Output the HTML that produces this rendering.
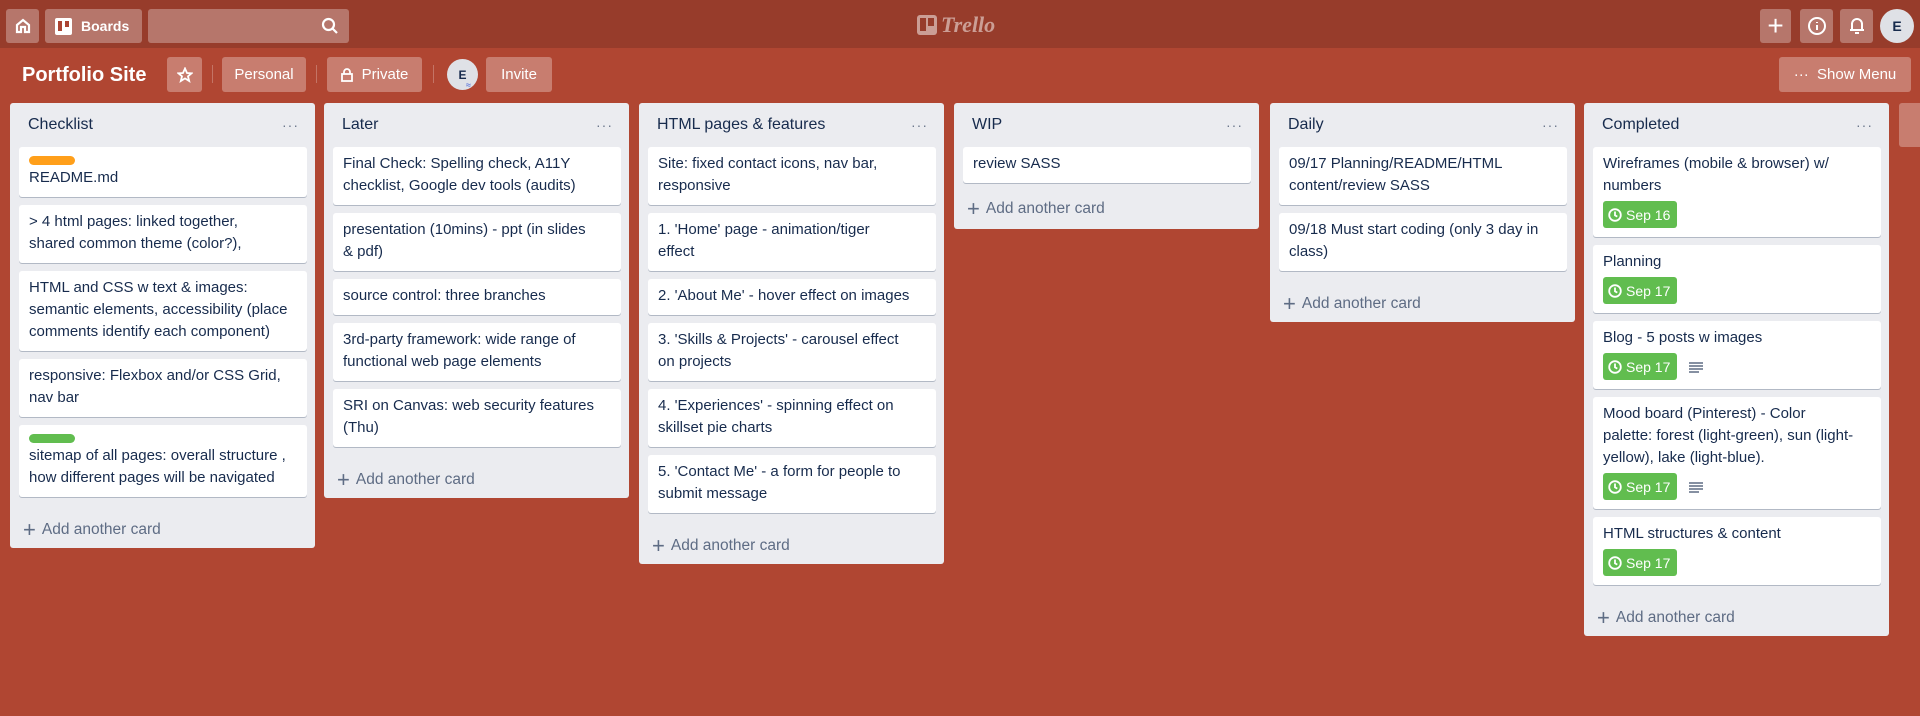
<!DOCTYPE html>
<html><head><meta charset="utf-8"><style>
*{box-sizing:border-box;margin:0;padding:0}
body{width:1920px;height:716px;overflow:hidden;background:#b04632;font-family:"Liberation Sans",sans-serif;color:#172b4d;position:relative}
.top{position:absolute;left:0;top:0;width:1920px;height:48px;background:#973c2b}
.btn{position:absolute;background:rgba(255,255,255,.3);border-radius:3px;color:#fff;display:flex;align-items:center;justify-content:center;font-size:15px}
.list{position:absolute;top:103px;width:305px;background:#ebecf0;border-radius:3px;padding:0 8px 0 9px}
.lh{height:44px;display:flex;align-items:center;justify-content:space-between;padding:0 8px 0 9px;font-size:16px}
.lh span.d{color:#6b778c;font-size:14px;letter-spacing:1px}
.card{background:#fff;border-radius:3px;box-shadow:0 1px 0 rgba(9,30,66,.25);margin-bottom:8.5px;padding:6px 10px 7.5px;font-size:15px;line-height:22px;white-space:nowrap;color:#172b4d}
.card.b{padding-bottom:8.5px}
.lab{width:46px;height:9px;border-radius:5px;margin:3px 0 2px}
.add{height:43px;display:flex;align-items:center;color:#5e6c84;font-size:15.5px;padding-left:4px;padding-top:7px}
.add b{font-weight:normal;font-size:22px;margin-right:6px;line-height:1}
.badge{display:inline-flex;align-items:center;background:#61bd4f;color:#fff;border-radius:3px;height:27px;padding:0 7px 0 5px;font-size:14px;margin-top:4px;vertical-align:middle}
.badge svg{margin-right:4px}
.desc{display:inline-block;vertical-align:middle;margin-left:12px;margin-top:4px}
</style></head><body>
<div class="top"></div>
<div class="btn" style="left:6px;top:9px;width:33px;height:34px"><svg width="18" height="18" viewBox="0 0 18 18" fill="none" stroke="#fff" stroke-width="2.2"><path d="M3 8L9 3L15 8V15H11V10H7V15H3Z"/></svg></div>
<div class="btn" style="left:45px;top:9px;width:97px;height:34px;font-weight:bold;font-size:14px;justify-content:flex-start;padding-left:10px"><svg width="17" height="17" viewBox="0 0 17 17" style="margin-right:9px"><rect x="0" y="0" width="17" height="17" rx="2" fill="#fff"/><rect x="3" y="3" width="4" height="10" fill="#ab4433"/><rect x="10" y="3" width="4" height="6" fill="#ab4433"/></svg>Boards</div>
<div class="btn" style="left:148px;top:9px;width:201px;height:34px;justify-content:flex-end;padding-right:10px"><svg width="18" height="18" viewBox="0 0 18 18" fill="none" stroke="#fff" stroke-width="2.2"><circle cx="7.5" cy="7.5" r="5.5"/><path d="M11.5 11.5L16 16"/></svg></div>
<div style="position:absolute;left:917px;top:12px;display:flex;align-items:center;color:rgba(255,255,255,.5);font-style:italic;font-weight:bold;font-size:22px;font-family:'Liberation Serif',serif"><svg width="20" height="20" viewBox="0 0 20 20" style="margin-right:4px"><rect width="20" height="20" rx="3" fill="rgba(255,255,255,.5)"/><rect x="3" y="3" width="6" height="13" fill="#973c2b"/><rect x="11" y="3" width="6" height="8" fill="#973c2b"/></svg>Trello</div>
<div class="btn" style="left:1760px;top:9px;width:31px;height:34px;font-size:28px;font-weight:300">+</div>
<div class="btn" style="left:1800px;top:9px;width:33px;height:34px"><svg width="20" height="20" viewBox="0 0 20 20" fill="none" stroke="#fff" stroke-width="2"><circle cx="10" cy="10" r="8"/><path d="M10 9V14M10 6V7"/></svg></div>
<div class="btn" style="left:1840px;top:9px;width:33px;height:34px"><svg width="18" height="20" viewBox="0 0 18 20" fill="none" stroke="#fff" stroke-width="2"><path d="M4 14V8a5 5 0 0110 0v6H4ZM2 14H16M7 17h4"/></svg></div>
<div style="position:absolute;left:1880px;top:9px;width:34px;height:34px;border-radius:50%;background:#dfe1e6;color:#172b4d;font-weight:bold;font-size:14px;display:flex;align-items:center;justify-content:center">E</div>

<div style="position:absolute;left:22px;top:64px;color:#fff;font-weight:bold;font-size:20px">Portfolio Site</div>
<div class="btn" style="left:167px;top:57px;width:35px;height:35px"><svg width="16" height="16" viewBox="0 0 16 16" fill="none" stroke="#fff" stroke-width="1.8"><path d="M8 1.5L10 6L14.5 6.3L11 9.3L12.2 14L8 11.4L3.8 14L5 9.3L1.5 6.3L6 6Z"/></svg></div>
<div style="position:absolute;left:212px;top:65px;width:1px;height:18px;background:rgba(255,255,255,.25)"></div>
<div class="btn" style="left:222px;top:57px;width:84px;height:35px">Personal</div>
<div style="position:absolute;left:316px;top:65px;width:1px;height:18px;background:rgba(255,255,255,.25)"></div>
<div class="btn" style="left:327px;top:57px;width:95px;height:35px"><svg width="12" height="14" viewBox="0 0 12 14" fill="none" stroke="#fff" stroke-width="1.8" style="margin-right:9px"><rect x="1" y="6" width="10" height="7"/><path d="M3 6V4a3 3 0 016 0v2"/></svg>Private</div>
<div style="position:absolute;left:433px;top:65px;width:1px;height:18px;background:rgba(255,255,255,.25)"></div>
<div style="position:absolute;left:447px;top:59px;width:31px;height:31px;border-radius:50%;background:#dfe1e6;color:#172b4d;font-weight:bold;font-size:12px;display:flex;align-items:center;justify-content:center">E</div>
<div style="position:absolute;left:466px;top:80px;color:#3a5bd9;font-size:9px">≈</div>
<div class="btn" style="left:486px;top:57px;width:66px;height:35px">Invite</div>
<div class="btn" style="left:1779px;top:57px;width:132px;height:35px">··· &nbsp;Show Menu</div>
<div class="btn" style="left:1899px;top:103px;width:30px;height:44px"></div>

<div class="list" style="left:10px">
<div class="lh">Checklist<span class="d">···</span></div>
<div class="card"><div class="lab" style="background:#ff9f1a"></div>README.md</div>
<div class="card">&gt; 4 html pages: linked together,<br>shared common theme (color?),</div>
<div class="card">HTML and CSS w text &amp; images:<br>semantic elements, accessibility (place<br>comments identify each component)</div>
<div class="card">responsive: Flexbox and/or CSS Grid,<br>nav bar</div>
<div class="card"><div class="lab" style="background:#61bd4f"></div>sitemap of all pages: overall structure ,<br>how different pages will be navigated</div>
<div class="add"><b>+</b>Add another card</div>
</div>

<div class="list" style="left:324px">
<div class="lh">Later<span class="d">···</span></div>
<div class="card">Final Check: Spelling check, A11Y<br>checklist, Google dev tools (audits)</div>
<div class="card">presentation (10mins) - ppt (in slides<br>&amp; pdf)</div>
<div class="card">source control: three branches</div>
<div class="card">3rd-party framework: wide range of<br>functional web page elements</div>
<div class="card">SRI on Canvas: web security features<br>(Thu)</div>
<div class="add"><b>+</b>Add another card</div>
</div>

<div class="list" style="left:639px">
<div class="lh">HTML pages &amp; features<span class="d">···</span></div>
<div class="card">Site: fixed contact icons, nav bar,<br>responsive</div>
<div class="card">1. 'Home' page - animation/tiger<br>effect</div>
<div class="card">2. 'About Me' - hover effect on images</div>
<div class="card">3. 'Skills &amp; Projects' - carousel effect<br>on projects</div>
<div class="card">4. 'Experiences' - spinning effect on<br>skillset pie charts</div>
<div class="card">5. 'Contact Me' - a form for people to<br>submit message</div>
<div class="add"><b>+</b>Add another card</div>
</div>

<div class="list" style="left:954px">
<div class="lh">WIP<span class="d">···</span></div>
<div class="card">review SASS</div>
<div class="add" style="height:40px;padding-top:0;margin-top:-2px"><b>+</b>Add another card</div>
</div>

<div class="list" style="left:1270px">
<div class="lh">Daily<span class="d">···</span></div>
<div class="card">09/17 Planning/README/HTML<br>content/review SASS</div>
<div class="card">09/18 Must start coding (only 3 day in<br>class)</div>
<div class="add"><b>+</b>Add another card</div>
</div>

<div class="list" style="left:1584px">
<div class="lh">Completed<span class="d">···</span></div>
<div class="card b">Wireframes (mobile &amp; browser) w/<br>numbers<br><span class="badge"><svg width="14" height="14" viewBox="0 0 14 14" fill="none" stroke="#fff" stroke-width="1.8"><circle cx="7" cy="7" r="5.8"/><path d="M7 3.5V7.3L9.3 8.6"/></svg>Sep 16</span></div>
<div class="card b">Planning<br><span class="badge"><svg width="14" height="14" viewBox="0 0 14 14" fill="none" stroke="#fff" stroke-width="1.8"><circle cx="7" cy="7" r="5.8"/><path d="M7 3.5V7.3L9.3 8.6"/></svg>Sep 17</span></div>
<div class="card b">Blog - 5 posts w images<br><span class="badge"><svg width="14" height="14" viewBox="0 0 14 14" fill="none" stroke="#fff" stroke-width="1.8"><circle cx="7" cy="7" r="5.8"/><path d="M7 3.5V7.3L9.3 8.6"/></svg>Sep 17</span><svg class="desc" width="14" height="12" viewBox="0 0 14 12" stroke="#5e6c84" stroke-width="1.4"><path d="M0 2H14M0 5H14M0 8H14M0 11H10"/></svg></div>
<div class="card b">Mood board (Pinterest) - Color<br>palette: forest (light-green), sun (light-<br>yellow), lake (light-blue).<br><span class="badge"><svg width="14" height="14" viewBox="0 0 14 14" fill="none" stroke="#fff" stroke-width="1.8"><circle cx="7" cy="7" r="5.8"/><path d="M7 3.5V7.3L9.3 8.6"/></svg>Sep 17</span><svg class="desc" width="14" height="12" viewBox="0 0 14 12" stroke="#5e6c84" stroke-width="1.4"><path d="M0 2H14M0 5H14M0 8H14M0 11H10"/></svg></div>
<div class="card b">HTML structures &amp; content<br><span class="badge"><svg width="14" height="14" viewBox="0 0 14 14" fill="none" stroke="#fff" stroke-width="1.8"><circle cx="7" cy="7" r="5.8"/><path d="M7 3.5V7.3L9.3 8.6"/></svg>Sep 17</span></div>
<div class="add"><b>+</b>Add another card</div>
</div>
</body></html>
